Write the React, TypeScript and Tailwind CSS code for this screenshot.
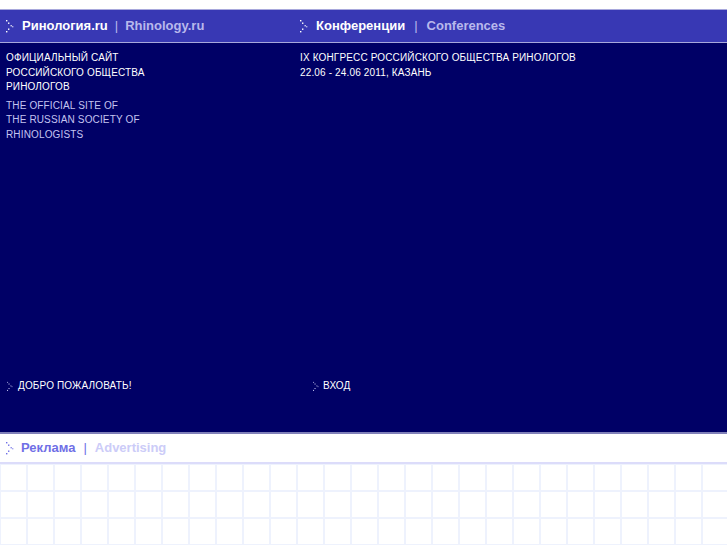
import React from "react";

function DotArrow({ className = "" }: { className?: string }) {
  // little dotted chevron used as a bullet
  return (
    <svg width="8" height="13" viewBox="0 0 8 13" className={className} aria-hidden>
      <rect x="0" y="0" width="1.4" height="1.4" fill="currentColor" />
      <rect x="2" y="2.5" width="1.4" height="1.4" fill="currentColor" />
      <rect x="4.5" y="5" width="1.4" height="1.4" fill="currentColor" opacity="0.8" />
      <rect x="6" y="6" width="1.4" height="1.4" fill="currentColor" opacity="0.6" />
      <rect x="2" y="8.5" width="1.4" height="1.4" fill="currentColor" />
      <rect x="0" y="11" width="1.4" height="1.4" fill="currentColor" />
    </svg>
  );
}

const font = { fontFamily: '"Liberation Sans", Arial, sans-serif' };

export default function App() {
  const cells = Array.from({ length: 27 * 3 });

  return (
    <div className="w-[727px] h-[545px] overflow-hidden bg-white" style={font}>
      <div className="h-[9px] bg-white" />

      <div className="flex h-[34px] items-center border-y border-[#a8a8dc] bg-[#3838b4] text-[13px] font-bold">
        <div className="flex w-[294px] items-center gap-[6px] pl-[6px]">
          <DotArrow className="mr-[2px] text-white" />
          <span className="text-white">Ринология.ru</span>
          <span className="px-[1px] font-normal text-[#b8b8ec]">|</span>
          <span className="text-[#b8b8ec]">Rhinology.ru</span>
        </div>
        <div className="flex items-center gap-[8px] pl-[6px]">
          <DotArrow className="text-white" />
          <span className="text-white">Конференции</span>
          <span className="px-[1px] font-normal text-[#b8b8ec]">|</span>
          <span className="text-[#b8b8ec]">Conferences</span>
        </div>
      </div>

      <div className="flex h-[389px] flex-col bg-[#000066] text-[10px] uppercase leading-[14.5px] tracking-[0.15px]">
        <div className="flex flex-1 pt-[8px]">
          <div className="w-[300px] pl-[6px]">
            <p className="text-white">
              Официальный сайт
              <br />
              Российского общества
              <br />
              ринологов
            </p>
            <p className="mt-[4px] text-[#c4c4f0]">
              The official site of
              <br />
              the Russian society of
              <br />
              rhinologists
            </p>
          </div>
          <div className="text-white">
            <p>
              IX Конгресс Российского общества ринологов
              <br />
              22.06 - 24.06 2011, Казань
            </p>
          </div>
        </div>
        <div className="flex h-[55px] items-start text-white">
          <div className="flex w-[312px] items-center gap-[4px] pl-[6px] pt-[2px]">
            <DotArrow className="scale-75 text-[#c4c4f0]" />
            <span>Добро пожаловать!</span>
          </div>
          <div className="flex items-center gap-[3px] pt-[2px]">
            <DotArrow className="scale-75 text-[#c4c4f0]" />
            <span>Вход</span>
          </div>
        </div>
      </div>

      <div className="h-[2px] bg-[#8080b8]" />
      <div className="flex h-[30px] items-center gap-[7px] border-b-2 border-[#dcdcfa] pl-[6px] text-[13px] font-bold">
        <DotArrow className="text-[#6f6fe6]" />
        <span className="text-[#6f6fe6]">Реклама</span>
        <span className="px-[1px] font-normal text-[#6f6fe6]">|</span>
        <span className="text-[#ccccf8]">Advertising</span>
      </div>

      <div className="grid grid-cols-[repeat(27,25px)] grid-rows-[repeat(3,25px)] gap-[2px] bg-[#eef2fd] p-[1px]">
        {cells.map((_, i) => (
          <div key={i} className="bg-white" />
        ))}
      </div>
    </div>
  );
}
